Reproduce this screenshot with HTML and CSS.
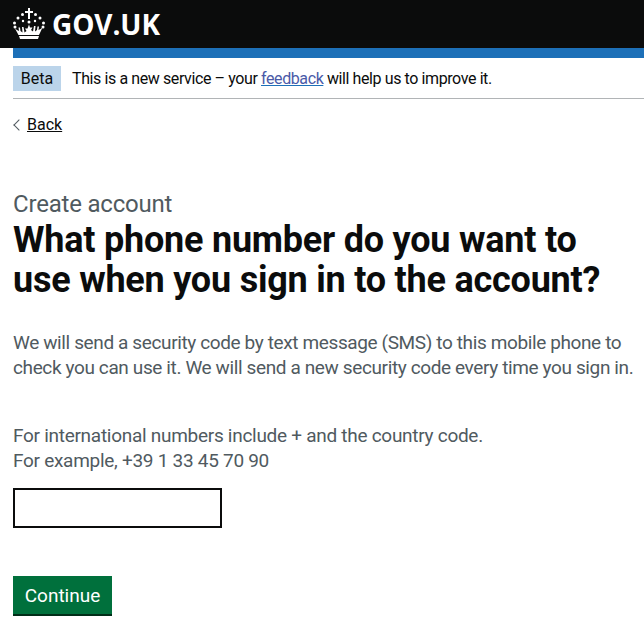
FILE: index.html
```html
<!DOCTYPE html>
<html lang="en">
<head>
    <meta charset="UTF-8">
    <meta name="viewport" content="width=device-width, initial-scale=1.0">
    <title>What phone number do you want to use when you sign in to the account? - GOV.UK</title>
    <link rel="stylesheet" href="styles.css">
</head>
<body>
    <header class="site-header">
        <a class="site-logo" href="#">
            <svg class="crown" viewBox="0 0 32 32" width="32" height="32" aria-hidden="true">
                <g fill="#fff">
                    <path d="M15 0h2v3h3v2h-3v6h-2V5h-3V3h3z"/>
                    <circle cx="9.500" cy="6.500" r="1.500"/>
                    <circle cx="22.500" cy="6.500" r="1.500"/>
                    <circle cx="5" cy="10" r="1.500"/>
                    <circle cx="27" cy="10" r="1.500"/>
                    <circle cx="1.500" cy="15" r="1.500"/>
                    <circle cx="30.500" cy="15" r="1.500"/>
                    <circle cx="2" cy="19" r="1.500"/>
                    <circle cx="30" cy="19" r="1.500"/>
                    <circle cx="16" cy="14" r="1.500"/>
                    <circle cx="10" cy="13" r="1.200"/>
                    <circle cx="22" cy="13" r="1.200"/>
                    <path d="M16 16.500l1 3 2.500 0-1.500 2.500 2 1.500 1-5.500 1.500 0-.5 5.500 2-1.500.5-3.500h1.500l-.5 3.500 2-1 2-1.500-3.500 7.500H5.500L2 20.500l2 1.500 2 1-.5-3.500h1.500l.5 3.500 2 1.500-.5-5.500h1.500l1 5.500 2-1.500-1.500-2.500 2.500 0z"/>
                    <path d="M6 28h20l-1 3H7z"/>
                </g>
            </svg>
            <span class="site-logo-text">GOV.UK</span>
        </a>
    </header>

    <div class="page-width">
        <div class="header-rule"></div>
        <div class="phase-banner">
            <strong class="phase-tag">Beta</strong>
            <span class="phase-text">This is a new service – your <a href="#" class="link-feedback">feedback</a> will help us to improve it.</span>
        </div>
        <a href="#" class="back-link">Back</a>

        <main class="main">
            <span class="caption">Create account</span>
            <h1 class="heading">What phone number do you want to use when you sign in to the account?</h1>
            <p class="body-text">We will send a security code by text message (SMS) to this mobile phone to check you can use it. We will send a new security code every time you sign in.</p>
            <form>
                <label class="hint" for="phone">For international numbers include + and the country code.<br>For example, +39 1 33 45 70 90</label>
                <input class="input" id="phone" type="tel">
                <button class="button" type="submit">Continue</button>
            </form>
        </main>
    </div>
</body>
</html>
```

FILE: styles.css
```css
* {
    box-sizing: border-box;
}

body {
    margin: 0;
    background: #fff;
    color: #0b0c0c;
    font-family: Roboto, Arial, sans-serif;
}

.site-header {
    background: #0b0c0c;
    height: 48px;
    padding-left: 13px;
    display: flex;
    align-items: center;
}

.site-logo {
    display: flex;
    align-items: center;
    gap: 7px;
    color: #fff;
    text-decoration: none;
}

.site-logo-text {
    font-family: "Open Sans", sans-serif;
    font-size: 28px;
    font-weight: 700;
    line-height: 30px;
    letter-spacing: -0.1px;
}

.page-width {
    margin-left: 13px;
}

.header-rule {
    height: 10px;
    background: #1d70b8;
}

.phase-banner {
    display: flex;
    align-items: center;
    height: 41px;
    padding-top: 1px;
    border-bottom: 1px solid #b1b4b6;
}

.phase-tag {
    background: #bbd4ea;
    color: #0b0c0c;
    font-size: 16px;
    font-weight: 400;
    line-height: 25px;
    width: 48px;
    text-align: center;
    margin-right: 11px;
}

.phase-text {
    font-size: 16px;
    line-height: 25px;
    letter-spacing: -0.4px;
}

.link-feedback {
    color: #4a5aa8;
    text-decoration-color: #1d70b8;
}

.back-link {
    display: inline-block;
    position: relative;
    margin-top: 16px;
    padding-left: 14px;
    font-size: 16px;
    line-height: 20px;
    color: #0b0c0c;
}

.back-link::before {
    content: "";
    position: absolute;
    left: 2px;
    top: 6px;
    width: 7px;
    height: 7px;
    border-left: 1px solid #505a5f;
    border-bottom: 1px solid #505a5f;
    transform: rotate(45deg);
}

.main {
    padding-top: 54px;
}

.caption {
    display: block;
    color: #505a5f;
    font-size: 24px;
    line-height: 31px;
    letter-spacing: -0.2px;
}

.heading {
    max-width: 600px;
    margin: 0 0 30px;
    font-size: 36px;
    font-weight: 700;
    line-height: 40px;
    letter-spacing: -0.22px;
}

.body-text {
    margin: 0 0 43px;
    color: #505a5f;
    font-size: 19px;
    line-height: 25px;
    letter-spacing: -0.38px;
}

.hint {
    display: block;
    color: #505a5f;
    font-size: 19px;
    line-height: 25px;
    letter-spacing: -0.28px;
    margin-bottom: 15px;
}

.input {
    display: block;
    width: 209px;
    height: 40px;
    border: 2px solid #0b0c0c;
    border-radius: 0;
    margin-bottom: 48px;
    background: #fff;
}

.button {
    display: block;
    width: 99px;
    height: 40px;
    padding: 0 0 2px;
    border: 0;
    border-radius: 0;
    background: #00703c;
    box-shadow: inset 0 -2px 0 #002d18;
    color: #fff;
    font-family: inherit;
    font-size: 19px;
    line-height: 25px;
}
```
